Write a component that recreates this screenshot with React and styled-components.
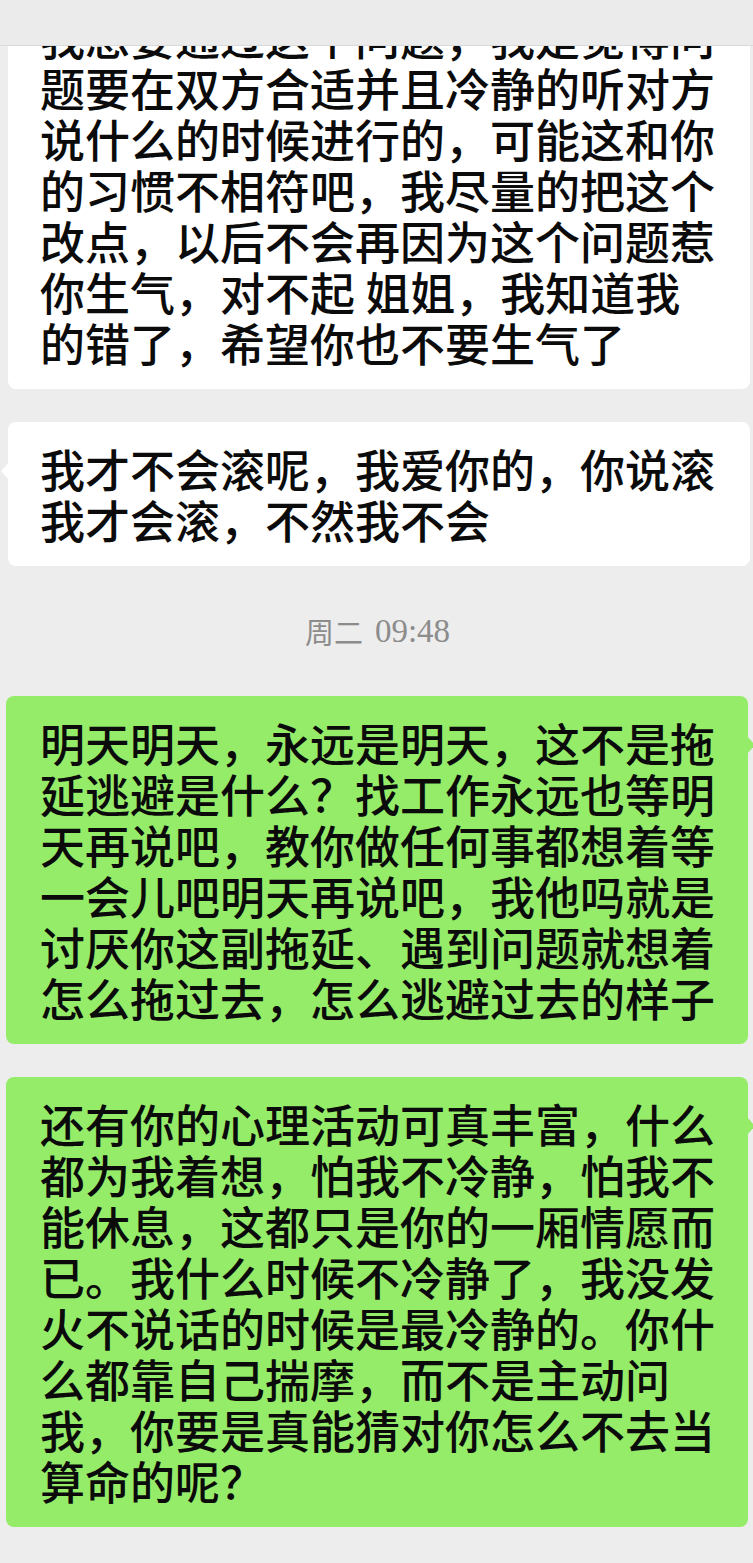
import React from "react";
import styled, { createGlobalStyle, css } from "styled-components";

const GlobalStyle = createGlobalStyle`
  html, body {
    margin: 0;
    padding: 0;
    background: #ededed;
  }
  body {
    font-family: "Liberation Serif", "Noto Sans CJK SC", serif;
  }
`;

// top bar of the chat, scrolled content passes under it
const TopBar = styled.div`
  position: fixed;
  top: 0;
  left: 0;
  right: 0;
  height: 45px;
  background: #ebebeb;
  border-bottom: 1px solid #dadada;
  z-index: 2;
`;

const Viewport = styled.div`
  width: 753px;
  height: 1563px;
  overflow: hidden;
  background: #ededed;
`;

// scroll position of the list: first bubble starts above the screen
const Feed = styled.div`
  display: flex;
  flex-direction: column;
  margin-top: -10px;
`;

const Bubble = styled.div`
  position: relative;
  box-sizing: border-box;
  width: 742px;
  padding: 21px 30px 21px 32px;
  border-radius: 8px;
  font-family: "Noto Sans CJK SC", sans-serif;
  font-size: 45px;
  line-height: 51px;
  font-weight: 500;
  color: #0b0b0b;
  white-space: nowrap;

  &::before {
    content: "";
    position: absolute;
    top: 40px;
    width: 0;
    height: 0;
    border-top: 9px solid transparent;
    border-bottom: 9px solid transparent;
  }

  ${(p) =>
    p.$mine
      ? css`
          background: #95ec69;
          margin-left: 6px;
          padding-left: 34px;
          &::before {
            right: -7px;
            border-left: 8px solid #95ec69;
          }
        `
      : css`
          background: #ffffff;
          margin-left: 8px;
          &::before {
            left: -7px;
            border-right: 8px solid #ffffff;
          }
        `}

  & + & {
    margin-top: ${(p) => p.$gap || 32}px;
  }
`;

const Line = styled.span`
  display: block;
`;

const Stamp = styled.div`
  height: 130px;
  display: flex;
  align-items: center;
  justify-content: center;
  font-family: "Liberation Serif", "Noto Sans CJK SC", serif;
  font-size: 29px;
  color: #8c8c8c;
  padding-left: 2px;
`;

const StampTime = styled.span`
  margin-left: 12px;
  font-size: 33px;
`;

const messages = [
  {
    mine: false,
    lines: [
      "我想要通过这个问题，我是觉得问",
      "题要在双方合适并且冷静的听对方",
      "说什么的时候进行的，可能这和你",
      "的习惯不相符吧，我尽量的把这个",
      "改点，以后不会再因为这个问题惹",
      "你生气，对不起 姐姐，我知道我",
      "的错了，希望你也不要生气了",
    ],
  },
  {
    mine: false,
    lines: ["我才不会滚呢，我爱你的，你说滚", "我才会滚，不然我不会"],
  },
  { stamp: ["周二", "09:48"] },
  {
    mine: true,
    lines: [
      "明天明天，永远是明天，这不是拖",
      "延逃避是什么？找工作永远也等明",
      "天再说吧，教你做任何事都想着等",
      "一会儿吧明天再说吧，我他吗就是",
      "讨厌你这副拖延、遇到问题就想着",
      "怎么拖过去，怎么逃避过去的样子",
    ],
  },
  {
    mine: true,
    gap: 33,
    lines: [
      "还有你的心理活动可真丰富，什么",
      "都为我着想，怕我不冷静，怕我不",
      "能休息，这都只是你的一厢情愿而",
      "已。我什么时候不冷静了，我没发",
      "火不说话的时候是最冷静的。你什",
      "么都靠自己揣摩，而不是主动问",
      "我，你要是真能猜对你怎么不去当",
      "算命的呢？",
    ],
  },
];

export default function App() {
  return (
    <Viewport>
      <GlobalStyle />
      <TopBar />
      <Feed>
        {messages.map((m, i) =>
          m.stamp ? (
            <Stamp key={i}>
              {m.stamp[0]}
              <StampTime>{m.stamp[1]}</StampTime>
            </Stamp>
          ) : (
            <Bubble key={i} $mine={m.mine} $gap={m.gap}>
              {m.lines.map((l, j) => (
                <Line key={j}>{l}</Line>
              ))}
            </Bubble>
          )
        )}
      </Feed>
    </Viewport>
  );
}
